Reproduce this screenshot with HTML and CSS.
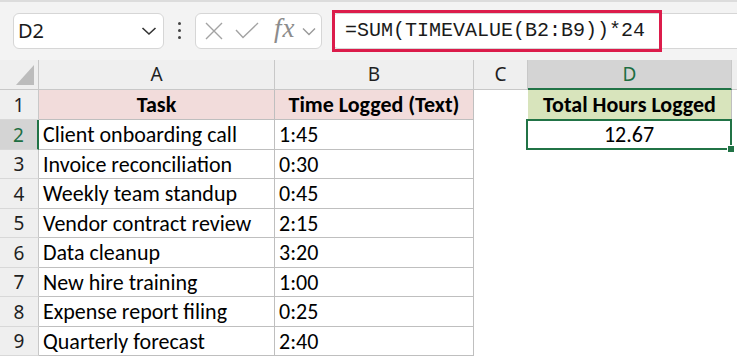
FILE: index.html
```html
<!DOCTYPE html>
<html>
<head>
<meta charset="utf-8">
<link rel="stylesheet" href="styles.css">
</head>
<body>
<div class="app">
  <div class="toolbar">
    <div class="namebox">
      <span class="name">D2</span>
      <svg class="chev" width="16" height="10" viewBox="0 0 16 10"><path d="M1.5 2 L8 8 L14.5 2" fill="none" stroke="#333" stroke-width="1.6"/></svg>
    </div>
    <div class="dots"><i></i><i></i><i></i></div>
    <div class="fxbox">
      <svg class="ico" width="22" height="20" viewBox="0 0 22 20"><path d="M3 2 L19 18 M19 2 L3 18" stroke="#a3a3a3" stroke-width="1.4" fill="none"/></svg>
      <svg class="ico" width="26" height="20" viewBox="0 0 26 20"><path d="M2 9 L9 16.5 L24 2" stroke="#a3a3a3" stroke-width="1.4" fill="none"/></svg>
      <span class="fx">fx</span>
      <svg class="chev small" width="14" height="9" viewBox="0 0 14 9"><path d="M1 1.5 L7 7.5 L13 1.5" fill="none" stroke="#9a9a9a" stroke-width="1.4"/></svg>
    </div>
    <div class="formula">
      <div class="highlight"><span class="formula-text">=SUM(TIMEVALUE(B2:B9))*24</span></div>
    </div>
  </div>

  <div class="sheet">
    <div class="ch corner"><svg width="39" height="30" viewBox="0 0 39 30"><polygon points="16,25 34,25 34,5" fill="#bcbcbc"/></svg></div>
    <div class="ch">A</div>
    <div class="ch">B</div>
    <div class="ch">C</div>
    <div class="ch sel">D</div>
    <div class="ch last"></div>

    <div class="rh">1</div>
    <div class="c head">Task</div>
    <div class="c head">Time Logged (Text)</div>
    <div class="e"></div>
    <div class="d1">Total Hours Logged</div>
    <div class="e"></div>

    <div class="rh sel">2</div>
    <div class="c">Client onboarding call</div>
    <div class="c">1:45</div>
    <div class="e"></div>
    <div class="d2">12.67<span class="handle"></span></div>
    <div class="e"></div>

    <div class="rh">3</div>
    <div class="c">Invoice reconciliation</div>
    <div class="c">0:30</div>
    <div class="e"></div><div class="e"></div><div class="e"></div>

    <div class="rh">4</div>
    <div class="c">Weekly team standup</div>
    <div class="c">0:45</div>
    <div class="e"></div><div class="e"></div><div class="e"></div>

    <div class="rh">5</div>
    <div class="c">Vendor contract review</div>
    <div class="c">2:15</div>
    <div class="e"></div><div class="e"></div><div class="e"></div>

    <div class="rh">6</div>
    <div class="c">Data cleanup</div>
    <div class="c">3:20</div>
    <div class="e"></div><div class="e"></div><div class="e"></div>

    <div class="rh">7</div>
    <div class="c">New hire training</div>
    <div class="c">1:00</div>
    <div class="e"></div><div class="e"></div><div class="e"></div>

    <div class="rh">8</div>
    <div class="c">Expense report filing</div>
    <div class="c">0:25</div>
    <div class="e"></div><div class="e"></div><div class="e"></div>

    <div class="rh">9</div>
    <div class="c">Quarterly forecast</div>
    <div class="c">2:40</div>
    <div class="e"></div><div class="e"></div><div class="e"></div>
  </div>
</div>
</body>
</html>
```

FILE: styles.css
```css
* { box-sizing: border-box; }
html, body { margin: 0; padding: 0; background: #ffffff; overflow: hidden; }
.app { width: 737px; height: 357px; }

.toolbar {
  height: 60px;
  background: #f3f3f3;
  border-top: 2px solid #dcdcdc;
  display: flex;
  align-items: center;
  padding: 0 0 1px 13px;
  font-family: "Noto Sans", "Open Sans", sans-serif;
}
.namebox {
  width: 151px;
  height: 36px;
  background: #ffffff;
  border: 1px solid #d6d6d6;
  border-radius: 6px;
  display: flex;
  align-items: center;
  justify-content: space-between;
  padding: 0 6px 0 4px;
}
.name { font-size: 20px; color: #1b1b1b; }
.chev { display: block; }
.dots {
  width: 3px;
  margin: 0 14px 0 14px;
  display: flex;
  flex-direction: column;
  gap: 4px;
}
.dots i { display: block; width: 3px; height: 3px; border-radius: 50%; background: #444; }
.fxbox {
  width: 127px;
  height: 36px;
  background: #ffffff;
  border: 1px solid #d6d6d6;
  border-radius: 6px;
  display: flex;
  align-items: center;
  padding: 0 0 0 7px;
  gap: 0;
}
.ico { display: block; margin-right: 9px; }
.ico + .ico { margin-right: 14px; }
.fx {
  font-family: "Liberation Serif", serif;
  font-style: italic;
  font-size: 27px;
  color: #8c8c8c;
  margin-right: 6px;
  line-height: 1;
  margin-top: -4px;
  letter-spacing: 1px;
}
.chev.small { margin-top: 1px; }
.formula {
  flex: 1;
  height: 36px;
  margin-left: 10px;
  background: #ffffff;
  border: 1px solid #d6d6d6;
  border-right: none;
  border-radius: 6px 0 0 6px;
  display: flex;
  align-items: center;
}
.highlight {
  width: 330px;
  height: 42px;
  margin-left: -1px;
  border: 3px solid #dc1c4b;
  display: flex;
  align-items: center;
  padding-left: 10px;
  flex: none;
}
.formula-text {
  font-family: "Liberation Mono", "DejaVu Sans Mono", monospace;
  font-size: 20px;
  color: #1a1a1a;
  white-space: nowrap;
}

.sheet {
  display: grid;
  grid-template-columns: 39px 236px 199px 54px 204px 1fr;
  grid-template-rows: 30px 30px 30px 29px 30px 29px 30px 29px 30px 29px;
  font-family: "Carlito", "Lato", sans-serif;
}
.ch {
  background: #efefef;
  border-right: 1px solid #c8c8c8;
  border-bottom: 1px solid #c8c8c8;
  display: flex;
  align-items: center;
  justify-content: center;
  font-family: "Noto Sans", "Open Sans", sans-serif;
  font-size: 19px;
  color: #1f1f1f;
  padding-bottom: 1px;
}
.ch.corner { padding: 0; display: block; }
.ch.corner svg { display: block; }
.ch.sel {
  background: #d4d4d4;
  color: #1e6e42;
  border-bottom: 2px solid #217346;
}
.ch.last { border-right: none; }
.rh {
  background: #efefef;
  border-right: 1px solid #c8c8c8;
  border-bottom: 1px solid #d8d8d8;
  display: flex;
  align-items: center;
  justify-content: center;
  font-family: "Noto Sans", "Open Sans", sans-serif;
  font-size: 19px;
  color: #1f1f1f;
}
.rh.sel {
  background: #d4d4d4;
  color: #1e6e42;
  border-right: 2px solid #217346;
}
.c {
  border-right: 1px solid #bfbfbf;
  border-bottom: 1px solid #bfbfbf;
  display: flex;
  align-items: center;
  padding: 0 0 0 4px;
  font-size: 22px;
  color: #000;
  white-space: nowrap;
  overflow: hidden;
}
.c.head {
  background: #f2dcdb;
  font-weight: bold;
  justify-content: center;
  padding-left: 0;
}
.e { background: #fff; }
.d1 {
  background: #d8e4bc;
  border-right: 1px solid #bfbfbf;
  border-bottom: 1px solid #bfbfbf;
  display: flex;
  align-items: center;
  justify-content: center;
  font-size: 22px;
  font-weight: bold;
  color: #000;
  white-space: nowrap;
}
.d2 {
  position: relative;
  margin: -1px 0 0 -2px;
  border: 2px solid #217346;
  display: flex;
  align-items: center;
  justify-content: center;
  font-size: 22px;
  color: #000;
}
.handle {
  position: absolute;
  right: -5px;
  bottom: -5px;
  width: 8px;
  height: 8px;
  background: #217346;
  border: 1px solid #fff;
}
```
